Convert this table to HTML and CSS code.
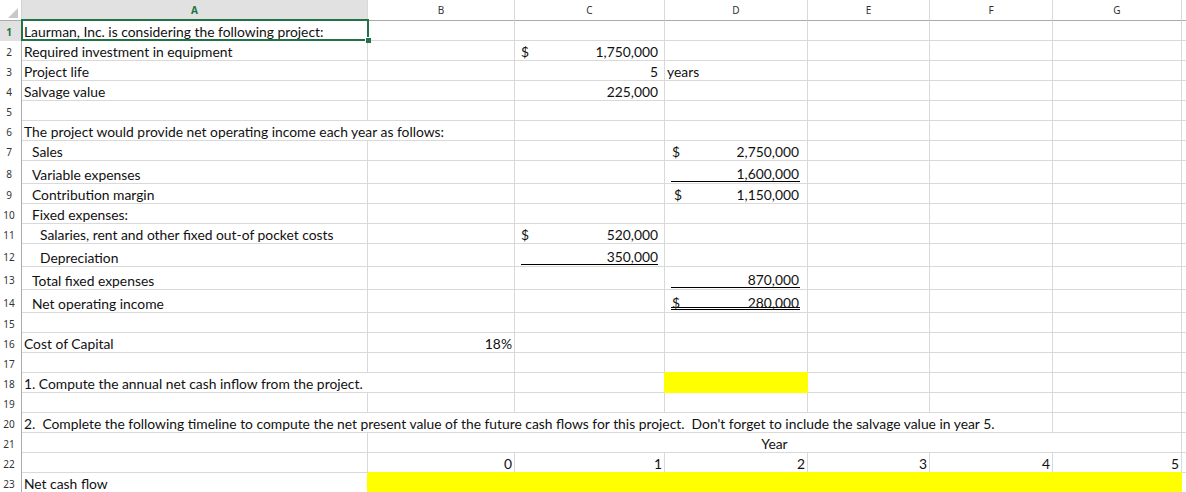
FILE: index.html
```html
<!DOCTYPE html>
<html>
<head>
<meta charset="utf-8">
<title>Laurman, Inc.</title>
<link rel="stylesheet" href="styles.css">
</head>
<body>
<div class="sheet">
  <div class="row hdr">
    <div class="corner"><span class="tri"></span></div>
    <div class="ch on">A</div><div class="ch">B</div><div class="ch">C</div><div class="ch">D</div><div class="ch">E</div><div class="ch">F</div><div class="ch">G</div><div class="ch"></div>
  </div>

  <div class="row">
    <div class="rh on">1</div>
    <div class="c t">Laurman, Inc. is considering the following project:</div>
    <div class="c"></div><div class="c"></div><div class="c"></div><div class="c"></div><div class="c"></div><div class="c"></div><div class="c"></div>
  </div>

  <div class="row">
    <div class="rh">2</div>
    <div class="c t">Required investment in equipment</div>
    <div class="c"></div>
    <div class="c a"><div class="acct"><span>$</span><span>1,750,000</span></div></div>
    <div class="c"></div><div class="c"></div><div class="c"></div><div class="c"></div><div class="c"></div>
  </div>

  <div class="row">
    <div class="rh">3</div>
    <div class="c t">Project life</div>
    <div class="c"></div>
    <div class="c a"><div class="acct end"><span>5</span></div></div>
    <div class="c t">years</div>
    <div class="c"></div><div class="c"></div><div class="c"></div><div class="c"></div>
  </div>

  <div class="row">
    <div class="rh">4</div>
    <div class="c t">Salvage value</div>
    <div class="c"></div>
    <div class="c a"><div class="acct end"><span>225,000</span></div></div>
    <div class="c"></div><div class="c"></div><div class="c"></div><div class="c"></div><div class="c"></div>
  </div>

  <div class="row">
    <div class="rh">5</div>
    <div class="c"></div><div class="c"></div><div class="c"></div><div class="c"></div><div class="c"></div><div class="c"></div><div class="c"></div><div class="c"></div>
  </div>

  <div class="row">
    <div class="rh">6</div>
    <div class="c t span2">The project would provide net operating income each year as follows:</div>
    <div class="c"></div><div class="c"></div><div class="c"></div><div class="c"></div><div class="c"></div><div class="c"></div>
  </div>

  <div class="row">
    <div class="rh">7</div>
    <div class="c t i1">Sales</div>
    <div class="c"></div><div class="c"></div>
    <div class="c a"><div class="acct d"><span>$</span><span>2,750,000</span></div></div>
    <div class="c"></div><div class="c"></div><div class="c"></div><div class="c"></div>
  </div>

  <div class="row h23">
    <div class="rh">8</div>
    <div class="c t i1">Variable expenses</div>
    <div class="c"></div><div class="c"></div>
    <div class="c a"><div class="acct d end ul"><span>1,600,000</span></div></div>
    <div class="c"></div><div class="c"></div><div class="c"></div><div class="c"></div>
  </div>

  <div class="row">
    <div class="rh">9</div>
    <div class="c t i1">Contribution margin</div>
    <div class="c"></div><div class="c"></div>
    <div class="c a"><div class="acct d d2"><span>$</span><span>1,150,000</span></div></div>
    <div class="c"></div><div class="c"></div><div class="c"></div><div class="c"></div>
  </div>

  <div class="row">
    <div class="rh">10</div>
    <div class="c t i1">Fixed expenses:</div>
    <div class="c"></div><div class="c"></div><div class="c"></div><div class="c"></div><div class="c"></div><div class="c"></div><div class="c"></div>
  </div>

  <div class="row">
    <div class="rh">11</div>
    <div class="c t i2">Salaries, rent and other fixed out-of pocket costs</div>
    <div class="c"></div>
    <div class="c a"><div class="acct"><span>$</span><span>520,000</span></div></div>
    <div class="c"></div><div class="c"></div><div class="c"></div><div class="c"></div><div class="c"></div>
  </div>

  <div class="row h23">
    <div class="rh">12</div>
    <div class="c t i2">Depreciation</div>
    <div class="c"></div>
    <div class="c a"><div class="acct end ul"><span>350,000</span></div></div>
    <div class="c"></div><div class="c"></div><div class="c"></div><div class="c"></div><div class="c"></div>
  </div>

  <div class="row h23">
    <div class="rh">13</div>
    <div class="c t i1">Total fixed expenses</div>
    <div class="c"></div><div class="c"></div>
    <div class="c a"><div class="acct d end ul"><span>870,000</span></div></div>
    <div class="c"></div><div class="c"></div><div class="c"></div><div class="c"></div>
  </div>

  <div class="row h23">
    <div class="rh">14</div>
    <div class="c t i1">Net operating income</div>
    <div class="c"></div><div class="c"></div>
    <div class="c a"><div class="acct d dbl"><span>$</span><span>280,000</span></div></div>
    <div class="c"></div><div class="c"></div><div class="c"></div><div class="c"></div>
  </div>

  <div class="row">
    <div class="rh">15</div>
    <div class="c"></div><div class="c"></div><div class="c"></div><div class="c"></div><div class="c"></div><div class="c"></div><div class="c"></div><div class="c"></div>
  </div>

  <div class="row">
    <div class="rh">16</div>
    <div class="c t">Cost of Capital</div>
    <div class="c num">18%</div>
    <div class="c"></div><div class="c"></div><div class="c"></div><div class="c"></div><div class="c"></div><div class="c"></div>
  </div>

  <div class="row">
    <div class="rh">17</div>
    <div class="c"></div><div class="c"></div><div class="c"></div><div class="c"></div><div class="c"></div><div class="c"></div><div class="c"></div><div class="c"></div>
  </div>

  <div class="row">
    <div class="rh">18</div>
    <div class="c t span2">1. Compute the annual net cash inflow from the project.</div>
    <div class="c"></div>
    <div class="c yel"></div>
    <div class="c"></div><div class="c"></div><div class="c"></div><div class="c"></div>
  </div>

  <div class="row">
    <div class="rh">19</div>
    <div class="c"></div><div class="c"></div><div class="c"></div><div class="c"></div><div class="c"></div><div class="c"></div><div class="c"></div><div class="c"></div>
  </div>

  <div class="row">
    <div class="rh">20</div>
    <div class="c t span6">2.  Complete the following timeline to compute the net present value of the future cash flows for this project.  Don't forget to include the salvage value in year 5.</div>
    <div class="c"></div><div class="c"></div>
  </div>

  <div class="row">
    <div class="rh">21</div>
    <div class="c"></div>
    <div class="c ctr span6">Year</div>
    <div class="c"></div>
  </div>

  <div class="row">
    <div class="rh">22</div>
    <div class="c"></div>
    <div class="c num">0</div><div class="c num">1</div><div class="c num">2</div><div class="c num">3</div><div class="c num">4</div><div class="c num">5</div>
    <div class="c"></div>
  </div>

  <div class="row">
    <div class="rh">23</div>
    <div class="c t">Net cash flow</div>
    <div class="c yel span6"></div>
    <div class="c"></div>
  </div>

  <div class="sel"><span class="handle"></span></div>
</div>
</body>
</html>
```

FILE: styles.css
```css
* { box-sizing: border-box; }
html, body { margin: 0; padding: 0; background: #fff; }
body { width: 1186px; height: 492px; overflow: hidden; }

.sheet {
  position: relative;
  font-family: Lato, "Liberation Sans", sans-serif;
  font-size: 13.85px;
  color: #111;
}

.row {
  display: grid;
  grid-template-columns: 22px 346px 147px 150px 143px 122px 123px 129px 40px;
  height: 20px;
}
.row.hdr { height: 21px; }
.row.h23 { height: 23px; }

/* headers */
.corner {
  border-right: 1px solid #d4d4d4;
  border-bottom: 1px solid #ababab;
  display: flex;
  justify-content: flex-end;
  align-items: flex-end;
  padding: 0 3px 2px 0;
}
.tri {
  width: 0; height: 0;
  border-left: 10px solid transparent;
  border-bottom: 10px solid #c8c8c8;
}
.ch {
  border-right: 1px solid #d9d9d9;
  border-bottom: 1px solid #ababab;
  display: flex;
  align-items: center;
  justify-content: center;
  font-family: "Noto Sans", "Open Sans", sans-serif;
  font-size: 10px;
  color: #333;
}
.ch.on { background: #e1e1e1; color: #217346; font-weight: bold; }
.rh {
  border-right: 1px solid #ababab;
  display: flex;
  align-items: center;
  justify-content: center;
  padding: 2px 3px 0 0;
  font-family: "Noto Sans", "Open Sans", sans-serif;
  font-size: 10px;
  color: #333;
}
.rh.on { background: #e1e1e1; color: #217346; font-weight: bold; }

/* cells */
.c {
  border-right: 1px solid #d9d9d9;
  border-bottom: 1px solid #d9d9d9;
  display: flex;
  align-items: flex-end;
  white-space: pre;
  line-height: 17px;
  padding: 0 2px;
  min-width: 0;
}
.c.t { padding-left: 2px; }
.c.i1 { padding-left: 10px; }
.c.i2 { padding-left: 18px; }
.c.num { justify-content: flex-end; padding-right: 2px; }
.c.ctr { justify-content: center; }
.span2 { grid-column: span 2; }
.span6 { grid-column: span 6; }

.c.a { padding: 0; }
.acct {
  flex: 1;
  display: flex;
  align-items: flex-end;
  justify-content: space-between;
  margin: 0 6px;
  padding: 0;
}
.acct.end { justify-content: flex-end; }
.acct.d { margin-right: 7px; padding: 0 1px; }
.acct.d2 { padding-left: 3px; }
.acct.ul { border-bottom: 1px solid #000; margin-bottom: 1px; }
.acct.ul > span { margin-bottom: -1px; }
.acct.dbl { border-bottom: 3px double #000; margin-bottom: 2px; }
.acct.dbl > span { margin-bottom: -4px; }

.yel {
  background: #ffff00;
  border-right-color: #ffff00;
  border-bottom-color: #ffff00;
  box-shadow: -1px 0 0 #ffff00, 0 -1px 0 #ffff00;
}

/* active cell selection */
.sel {
  position: absolute;
  left: 21px;
  top: 19px;
  width: 348px;
  height: 22px;
  border: 2px solid #217346;
}
.handle {
  position: absolute;
  right: -4px;
  bottom: -4px;
  width: 6px;
  height: 6px;
  background: #217346;
  border-left: 1px solid #fff;
  border-top: 1px solid #fff;
}
```
